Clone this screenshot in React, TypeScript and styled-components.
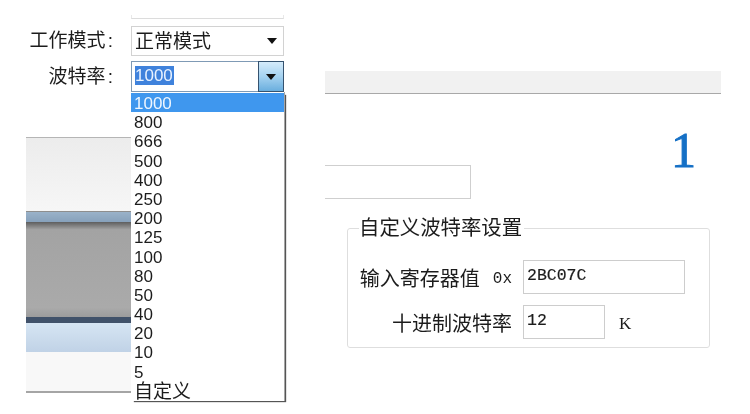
import styled, { createGlobalStyle } from "styled-components";

const rates = ["1000", "800", "666", "500", "400", "250", "200", "125", "100", "80", "50", "40", "20", "10", "5", "自定义"];

const GlobalStyle = createGlobalStyle`
  html, body {
    margin: 0;
    background: #ffffff;
    overflow: hidden;
  }
`;

const Page = styled.div`
  position: relative;
  width: 750px;
  height: 414px;
  display: grid;
  grid-template-columns: 325px 1fr;
  color: #1c1c1c;
  font-family: "Liberation Sans", "Noto Sans CJK SC", sans-serif;
  overflow: hidden;
  filter: blur(0.35px);
`;

const LeftColumn = styled.div`
  display: flex;
  flex-direction: column;
`;

const TopStrip = styled.div`
  margin: 15px 0 0 131px;
  width: 153px;
  height: 4px;
  border-bottom: 1px solid #dcdcdc;
  border-left: 1px solid #e8e8e8;
  border-right: 1px solid #e8e8e8;
  box-sizing: border-box;
`;

const Form = styled.div`
  margin-top: 7px;
  display: grid;
  grid-template-columns: 131px 153px;
  row-gap: 5px;
  align-items: center;
`;

const Label = styled.div`
  text-align: right;
  font-size: 19px;
  line-height: 30px;
  word-spacing: -3px;
  padding: 0 18px 3px 0;
  box-sizing: border-box;
  height: 30px;
  white-space: nowrap;
`;

const Combo = styled.div<{ $active?: boolean }>`
  position: relative;
  height: ${p => (p.$active ? 31 : 30)}px;
  box-sizing: border-box;
  display: flex;
  align-items: center;
  justify-content: space-between;
  padding-left: 3px;
  font-size: 19px;
  background: #fff;
  border: 1px solid ${p => (p.$active ? "#7f9ab5" : "#d2d2d2")};
`;

const ComboText = styled.span`
  padding-bottom: 4px;
`;

const Arrow = styled.i`
  display: block;
  width: 0;
  height: 0;
  border-left: 5.5px solid transparent;
  border-right: 5.5px solid transparent;
  border-top: 6px solid #111;
`;

const PlainArrow = styled.div`
  margin-right: 6px;
`;

const ComboButton = styled.div`
  align-self: stretch;
  width: 26px;
  box-sizing: border-box;
  display: flex;
  align-items: center;
  justify-content: center;
  border: 1px solid #35526f;
  margin: -1px -1px -1px 0;
  background: linear-gradient(#d5ebfa, #a5d2f0 50%, #6aaede);
`;

const Selected = styled.span`
  background: #3f82dc;
  color: #e8f2ff;
  font-size: 17px;
  line-height: 19px;
  padding: 0 1px 0 0;
  margin: 0 0 2px 0;
`;

const DropList = styled.ul`
  position: absolute;
  left: 131px;
  top: 92px;
  width: 154px;
  height: 309px;
  margin: 0;
  padding: 1px 0 0;
  box-sizing: border-box;
  list-style: none;
  background: #fff;
  border-right: 1px solid #a5a5a5;
  box-shadow: 2px 2px 1px -1px #555555;
  z-index: 2;
`;

const DropItem = styled.li<{ $selected?: boolean; $wide?: boolean }>`
  height: 19.2px;
  line-height: 21px;
  padding-left: 3px;
  font-size: ${p => (p.$wide ? 19 : 17)}px;
  white-space: nowrap;
  background: ${p => (p.$selected ? "#3f97ee" : "transparent")};
  color: ${p => (p.$selected ? "#eef6ff" : "#1c1c1c")};
`;

const Preview = styled.div`
  margin: 45px 0 0 26px;
  width: 160px;
  height: 256px;
  box-sizing: border-box;
  display: flex;
  flex-direction: column;
  border-top: 1px solid #b5b5b5;
  border-bottom: 2px solid #a5a5a5;
`;

const PreviewBand = styled.div<{ $h: number; $bg: string }>`
  height: ${p => p.$h}px;
  flex: none;
  background: ${p => p.$bg};
`;

const RightColumn = styled.div`
  padding-top: 71px;
  display: flex;
  flex-direction: column;
`;

const GrayBar = styled.div`
  width: 396px;
  height: 23px;
  box-sizing: border-box;
  background: #f1f1f1;
  border-bottom: 1px solid #a8a8a8;
`;

const MiddleRow = styled.div`
  display: flex;
  justify-content: space-between;
  width: 396px;
`;

const EmptyField = styled.div`
  margin-top: 71px;
  width: 146px;
  height: 34px;
  box-sizing: border-box;
  border: 1px solid #cfcfcf;
  border-left: none;
`;

const PageNumber = styled.div`
  margin: 31px 25px 0 0;
  font-family: "Liberation Serif", serif;
  font-size: 50px;
  line-height: 50px;
  color: #1570c6;
  -webkit-text-stroke: 1px #1570c6;
`;

const Group = styled.fieldset`
  margin: 17px 0 0 22px;
  width: 363px;
  height: 132px;
  box-sizing: border-box;
  padding: 0 0 0 12px;
  border: 1px solid #dedede;
  border-radius: 3px;
`;

const Legend = styled.legend`
  margin-left: -1px;
  padding: 0 2px 0 0;
  font-size: 20.4px;
  line-height: 24px;
`;

const FieldRows = styled.div`
  margin-top: 20px;
  display: grid;
  grid-template-columns: 152px 162px;
  column-gap: 11px;
  row-gap: 11px;
  align-items: center;
`;

const FieldLabel = styled.div`
  display: flex;
  justify-content: flex-end;
  align-items: center;
  gap: 13px;
  height: 34px;
  box-sizing: border-box;
  padding-top: 1px;
  font-size: 20px;
  white-space: nowrap;
`;

const Mono = styled.span`
  margin-top: 3px;
  font-family: "Liberation Mono", monospace;
  font-size: 16px;
`;

const FieldValue = styled.div`
  display: flex;
  align-items: center;
  gap: 14px;
`;

const ValueBox = styled.div<{ $w: number }>`
  width: ${p => p.$w}px;
  height: 34px;
  box-sizing: border-box;
  padding: 0 0 4px 3px;
  display: flex;
  align-items: center;
  border: 1px solid #cdcdcd;
  font-family: "Liberation Mono", monospace;
  font-size: 16.5px;
  -webkit-text-stroke: 0.2px #1c1c1c;
`;

const Unit = styled(Mono)`
  font-family: "Liberation Serif", serif;
  font-size: 17px;
`;

export default function App() {
  return (
    <Page>
      <GlobalStyle />
      <LeftColumn>
        <TopStrip />
        <Form>
          <Label>工作模式 :</Label>
          <Combo>
            <ComboText>正常模式</ComboText>
            <PlainArrow>
              <Arrow />
            </PlainArrow>
          </Combo>
          <Label>波特率 :</Label>
          <Combo $active>
            <Selected>1000</Selected>
            <ComboButton>
              <Arrow />
            </ComboButton>
          </Combo>
        </Form>
        <Preview>
          <PreviewBand $h={73} $bg="linear-gradient(#ececec, #f6f6f6)" />
          <PreviewBand $h={1} $bg="#8e8e8e" />
          <PreviewBand $h={10} $bg="linear-gradient(#9ab2c9, #87a1bb)" />
          <PreviewBand $h={95} $bg="linear-gradient(#5e5e5e, #a3a3a3 8%, #aaaaaa 90%, #9c9c9c)" />
          <PreviewBand $h={6} $bg="#41526a" />
          <PreviewBand $h={29} $bg="linear-gradient(#d6e5f3, #c0d2e6)" />
          <PreviewBand $h={39} $bg="#f8f8f8" />
        </Preview>
      </LeftColumn>
      <RightColumn>
        <GrayBar />
        <MiddleRow>
          <EmptyField />
          <PageNumber>1</PageNumber>
        </MiddleRow>
        <Group>
          <Legend>自定义波特率设置</Legend>
          <FieldRows>
            <FieldLabel>
              输入寄存器值
              <Mono>0x</Mono>
            </FieldLabel>
            <FieldValue>
              <ValueBox $w={162}>2BC07C</ValueBox>
            </FieldValue>
            <FieldLabel>十进制波特率</FieldLabel>
            <FieldValue>
              <ValueBox $w={82}>12</ValueBox>
              <Unit>K</Unit>
            </FieldValue>
          </FieldRows>
        </Group>
      </RightColumn>
      <DropList>
        {rates.map((rate, i) => (
          <DropItem key={rate} $selected={i === 0} $wide={rate === "自定义"}>
            {rate}
          </DropItem>
        ))}
      </DropList>
    </Page>
  );
}
